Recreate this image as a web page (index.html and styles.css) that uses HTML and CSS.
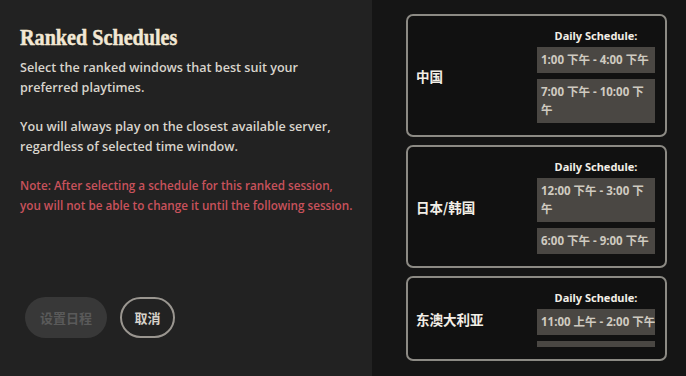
FILE: index.html
```html
<!DOCTYPE html>
<html lang="zh">
<head>
<meta charset="utf-8">
<title>Ranked Schedules</title>
<link rel="stylesheet" href="styles.css">
</head>
<body>
<div class="page">
  <section class="info">
    <h1 class="title">Ranked Schedules</h1>
    <p class="text">Select the ranked windows that best suit your preferred playtimes.</p>
    <p class="text">You will always play on the closest available server, regardless of selected time window.</p>
    <p class="note">Note: After selecting a schedule for this ranked session, you will not be able to change it until the following session.</p>
    <div class="actions">
      <button class="btn btn-disabled">设置日程</button>
      <button class="btn btn-outline">取消</button>
    </div>
  </section>
  <section class="regions">
    <div class="card">
      <div class="region">中国</div>
      <div class="schedule">
        <div class="sched-title">Daily Schedule:</div>
        <div class="slot">1:00 下午 - 4:00 下午</div>
        <div class="slot">7:00 下午 - 10:00 下午</div>
      </div>
    </div>
    <div class="card">
      <div class="region">日本/韩国</div>
      <div class="schedule">
        <div class="sched-title">Daily Schedule:</div>
        <div class="slot">12:00 下午 - 3:00 下午</div>
        <div class="slot">6:00 下午 - 9:00 下午</div>
      </div>
    </div>
    <div class="card">
      <div class="region">东澳大利亚</div>
      <div class="schedule schedule-clip">
        <div class="sched-title">Daily Schedule:</div>
        <div class="slot">11:00 上午 - 2:00 下午</div>
        <div class="slot">4:00 下午 - 7:00 下午</div>
      </div>
    </div>
  </section>
</div>
</body>
</html>
```

FILE: styles.css
```css
html, body {
  margin: 0;
  padding: 0;
  width: 686px;
  height: 376px;
  overflow: hidden;
  background: #222222;
}

.page {
  display: flex;
  width: 686px;
  height: 376px;
  font-family: "Open Sans", "Noto Sans CJK SC", sans-serif;
}

.info {
  width: 372px;
  box-sizing: border-box;
  padding: 23px 16px 38px 20px;
  background: #222222;
  display: flex;
  flex-direction: column;
}

.title {
  margin: 0 0 7px 0;
  font-family: "Liberation Serif", "DejaVu Serif", serif;
  font-weight: 700;
  font-size: 24px;
  line-height: 28px;
  color: #f2e8d4;
  -webkit-text-stroke: 0.5px #f2e8d4;
  transform: scaleX(0.84);
  transform-origin: left center;
  white-space: nowrap;
}

.text {
  margin: 0 0 20px 0;
  font-size: 12.6px;
  font-weight: 600;
  line-height: 19.5px;
  color: #d8d4cc;
}

.note {
  margin: 0;
  font-size: 11.7px;
  font-weight: 600;
  line-height: 19.5px;
  color: #c9525c;
}

.actions {
  margin-top: auto;
  display: flex;
  gap: 13px;
  padding-left: 5px;
}

.btn {
  height: 41px;
  border-radius: 21px;
  font-family: "Noto Sans CJK SC", sans-serif;
  font-weight: bold;
  font-size: 13px;
  box-sizing: border-box;
  cursor: pointer;
}

.btn-disabled {
  width: 82px;
  background: #383838;
  color: #5a5a5a;
  border: none;
}

.btn-outline {
  width: 55px;
  background: transparent;
  color: #d6d2ca;
  border: 2px solid #9a9690;
}

.regions {
  flex: 1;
  background: #151515;
  padding: 14px 19px 0 34px;
  display: flex;
  flex-direction: column;
  gap: 8px;
}

.card {
  display: flex;
  align-items: center;
  justify-content: space-between;
  border: 2px solid #8c8a84;
  border-radius: 7px;
  background: #111111;
  padding: 12px 10px 12px 8px;
}

.region {
  font-family: "Noto Sans CJK SC", sans-serif;
  font-weight: bold;
  font-size: 13.5px;
  color: #f2eee6;
}

.schedule {
  width: 118px;
  display: flex;
  flex-direction: column;
  gap: 6px;
}

.schedule-clip {
  height: 57px;
  overflow: hidden;
}

.schedule-clip .slot {
  white-space: nowrap;
}

.sched-title {
  font-family: "Noto Sans", sans-serif;
  font-weight: bold;
  font-size: 11px;
  line-height: 16px;
  text-align: center;
  color: #f2eee6;
  margin-bottom: -3px;
}

.slot {
  background: #4a4743;
  color: #cfcac0;
  font-family: "Open Sans", "Noto Sans CJK SC", sans-serif;
  font-weight: bold;
  font-size: 11.5px;
  line-height: 18px;
  padding: 4px 0 4px 4px;
  flex-shrink: 0;
}
```
